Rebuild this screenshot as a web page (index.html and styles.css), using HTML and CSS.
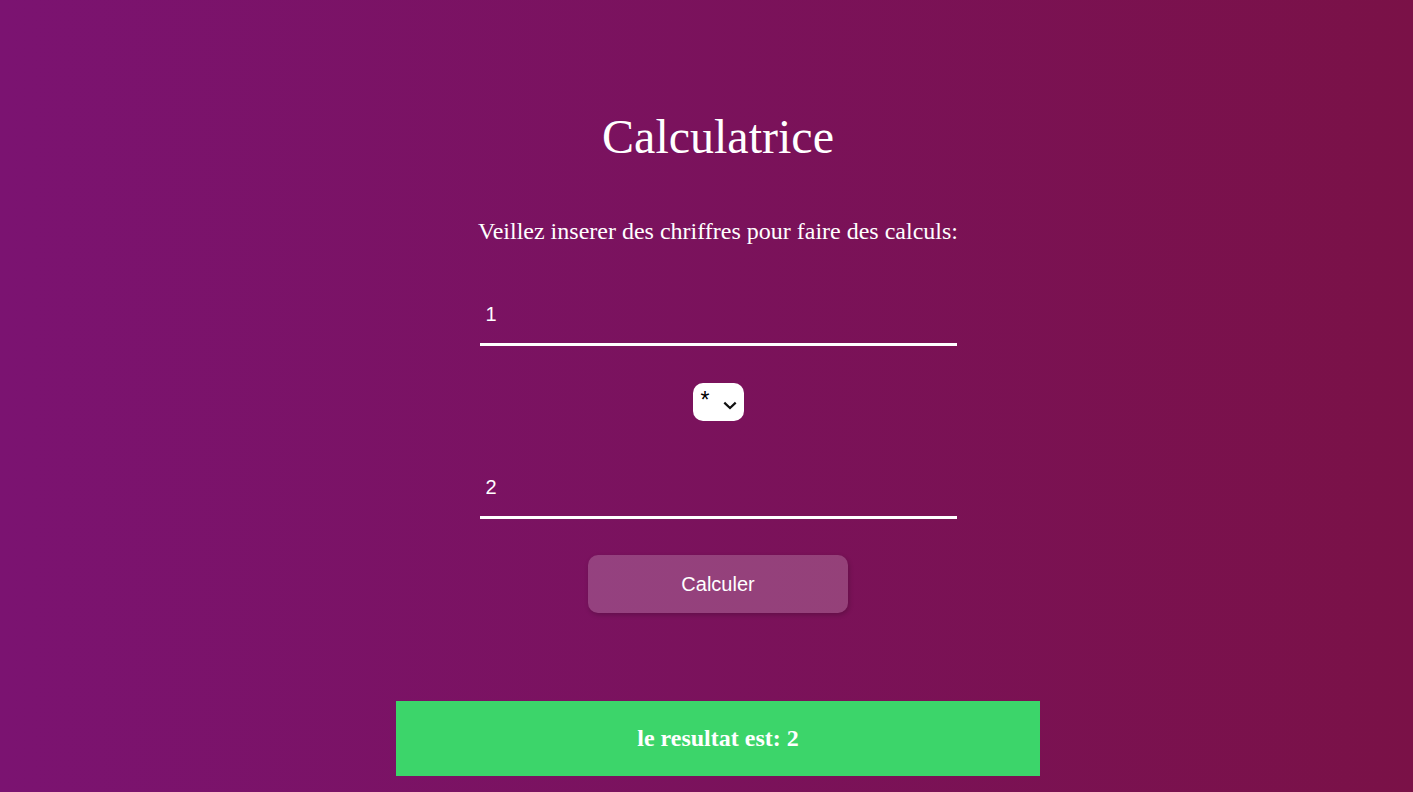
FILE: index.html
```html
<!DOCTYPE html>
<html lang="fr">
<head>
<meta charset="utf-8">
<title>Calculatrice</title>
<link rel="stylesheet" href="styles.css">
</head>
<body>
<main class="calc">
  <h1 class="calc-title">Calculatrice</h1>
  <p class="calc-intro">Veillez inserer des chriffres pour faire des calculs:</p>
  <input class="calc-input" type="text" value="1">
  <div class="calc-op">
    <span class="calc-op-value">*</span>
    <svg class="calc-op-chevron" width="14" height="9" viewBox="0 0 14 9"><path d="M1.3 1.6 L7 7 L12.7 1.6" fill="none" stroke="#111" stroke-width="2.2"/></svg>
  </div>
  <input class="calc-input calc-input-second" type="text" value="2">
  <button class="calc-button" type="button">Calculer</button>
  <h2 class="calc-result">le resultat est: 2</h2>
</main>
</body>
</html>
```
FILE: styles.css
```css
html, body {
  margin: 0;
  padding: 0;
  height: 100%;
}
body {
  background: linear-gradient(to right, #7b1371, #7a1147);
  color: #fff;
  font-family: "Liberation Serif", "Times New Roman", serif;
  overflow: hidden;
}
.calc {
  display: flex;
  flex-direction: column;
  align-items: center;
  padding: 110px 0 0 23px;
}
.calc-title {
  margin: 0;
  font-size: 48px;
  font-weight: normal;
  line-height: 53px;
}
.calc-intro {
  margin: 54px 0 0;
  font-size: 24px;
  line-height: 28px;
}
.calc-input {
  margin-top: 43px;
  width: 477px;
  box-sizing: border-box;
  padding: 15px 6px 17px;
  font-family: "Liberation Sans", Arial, sans-serif;
  font-size: 20px;
  line-height: 23px;
  color: #fff;
  background: transparent;
  border: none;
  border-bottom: 3px solid #fff;
  outline: none;
}
.calc-input-second {
  margin-top: 40px;
}
.calc-op {
  margin-top: 37px;
  width: 51px;
  height: 38px;
  box-sizing: border-box;
  background: #fff;
  border-radius: 10px;
  display: flex;
  align-items: flex-start;
  padding: 4px 0 0 8px;
  gap: 14px;
  color: #000;
  font-family: "Liberation Sans", Arial, sans-serif;
  font-size: 23px;
  line-height: 26px;
}
.calc-op-chevron {
  margin-top: 14px;
  flex: none;
}
.calc-button {
  margin-top: 36px;
  width: 260px;
  height: 58px;
  border: none;
  border-radius: 10px;
  background: rgba(255, 255, 255, 0.2);
  box-shadow: 1px 2px 5px rgba(0, 0, 0, 0.2);
  color: #fff;
  font-family: "Liberation Sans", Arial, sans-serif;
  font-size: 20px;
}
.calc-result {
  margin: 88px 0 0;
  width: 644px;
  height: 75px;
  box-sizing: border-box;
  background: #3cd56a;
  display: flex;
  align-items: center;
  justify-content: center;
  font-size: 24px;
  font-weight: bold;
}
```
